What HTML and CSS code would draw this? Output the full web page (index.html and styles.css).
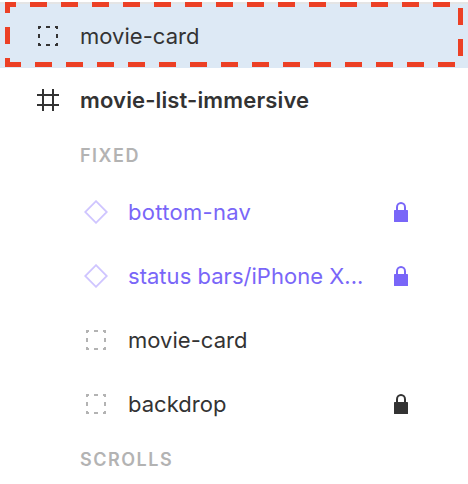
FILE: index.html
```html
<!DOCTYPE html>
<html lang="en">
<head>
<meta charset="utf-8">
<title>Layers</title>
<link rel="stylesheet" href="styles.css">
</head>
<body>
<svg class="defs" aria-hidden="true">
  <symbol id="group" viewBox="0 0 24 24">
    <path d="M2 2h3v2H4v1H2zM10 2h4v2h-4zM19 2h3v3h-2V4h-1zM2 10h2v4H2zM20 10h2v4h-2zM2 19h2v1h1v2H2zM10 20h4v2h-4zM20 19h2v3h-3v-2h1z" fill="currentColor"/>
  </symbol>
  <symbol id="frame" viewBox="0 0 24 24">
    <path d="M7 1v22M17 1v22M1 7h22M1 17h22" fill="none" stroke="currentColor" stroke-width="2"/>
  </symbol>
  <symbol id="instance" viewBox="0 0 24 24">
    <path d="M12 1.2 22.8 12 12 22.8 1.2 12z" fill="none" stroke="currentColor" stroke-width="1.8"/>
  </symbol>
  <symbol id="lock" viewBox="0 0 14 20">
    <path d="M3 9V5.2a4 4.2 0 0 1 8 0V9" fill="none" stroke="currentColor" stroke-width="2"/>
    <rect y="8" width="14" height="12" rx=".6" fill="currentColor"/>
  </symbol>
</svg>
<main class="layers">
  <div class="row selected">
    <svg class="icon"><use href="#group"/></svg>
    <span class="name">movie-card</span>
    <svg class="marquee" viewBox="0 0 468 66" aria-hidden="true">
      <path d="M5 2.5h11M30 2.5h421" stroke-dasharray="17 14"/>
      <path d="M5 62.5h16M35 62.5h421" stroke-dasharray="17 14"/>
      <path d="M7.5 0v11M7.5 25v17M7.5 56v9M460.5 6v17M460.5 37v17"/>
    </svg>
  </div>
  <div class="row frame">
    <svg class="icon"><use href="#frame"/></svg>
    <span class="name">movie-list-immersive</span>
  </div>
  <h2 class="label fixed">FIXED</h2>
  <div class="row child component">
    <svg class="icon"><use href="#instance"/></svg>
    <span class="name wide">bottom-nav</span>
    <svg class="lock"><use href="#lock"/></svg>
  </div>
  <div class="row child component">
    <svg class="icon"><use href="#instance"/></svg>
    <span class="name">status bars/iPhone X...</span>
    <svg class="lock"><use href="#lock"/></svg>
  </div>
  <div class="row child">
    <svg class="icon"><use href="#group"/></svg>
    <span class="name">movie-card</span>
  </div>
  <div class="row child">
    <svg class="icon"><use href="#group"/></svg>
    <span class="name">backdrop</span>
    <svg class="lock"><use href="#lock"/></svg>
  </div>
  <h2 class="label scrolls">SCROLLS</h2>
</main>
</body>
</html>
```
FILE: styles.css
```css
body {
  margin: 0;
  background: #fff;
  color: #333;
  font: 400 22px/32px Inter, sans-serif;
  overflow: hidden;
}
.defs { display: none; }
.layers {
  width: 468px;
  height: 482px;
  padding-top: 2px;
  overflow: hidden;
}
.row {
  display: flex;
  align-items: center;
  box-sizing: border-box;
  height: 64px;
  padding-left: 36px;
}
.icon {
  width: 24px;
  height: 24px;
  flex: none;
  margin-right: 20px;
}
.name {
  white-space: nowrap;
  letter-spacing: 0.03px;
}
.wide { letter-spacing: 0.3px; }
.selected {
  position: relative;
  height: 66px;
  border-top: 2px solid #e5e5e5;
  background: #dde9f5;
}
.marquee {
  position: absolute;
  left: 0;
  top: -2px;
  width: 468px;
  height: 66px;
  fill: none;
  stroke: #ec4025;
  stroke-width: 5;
}
.frame .name {
  font-weight: 600;
  letter-spacing: 0.14px;
}
.label {
  margin: 0;
  padding-left: 80px;
  height: 48px;
  font-size: 18px;
  font-weight: 600;
  line-height: 48px;
  letter-spacing: 1.5px;
  color: #b3b3b3;
}
.child { padding-left: 84px; }
.child .icon { color: #b3b3b3; }
.component { color: #7966f8; }
.component .icon { color: #cfc5ff; }
.child .name { width: 266px; }
.lock {
  width: 14px;
  height: 20px;
  flex: none;
}
```
